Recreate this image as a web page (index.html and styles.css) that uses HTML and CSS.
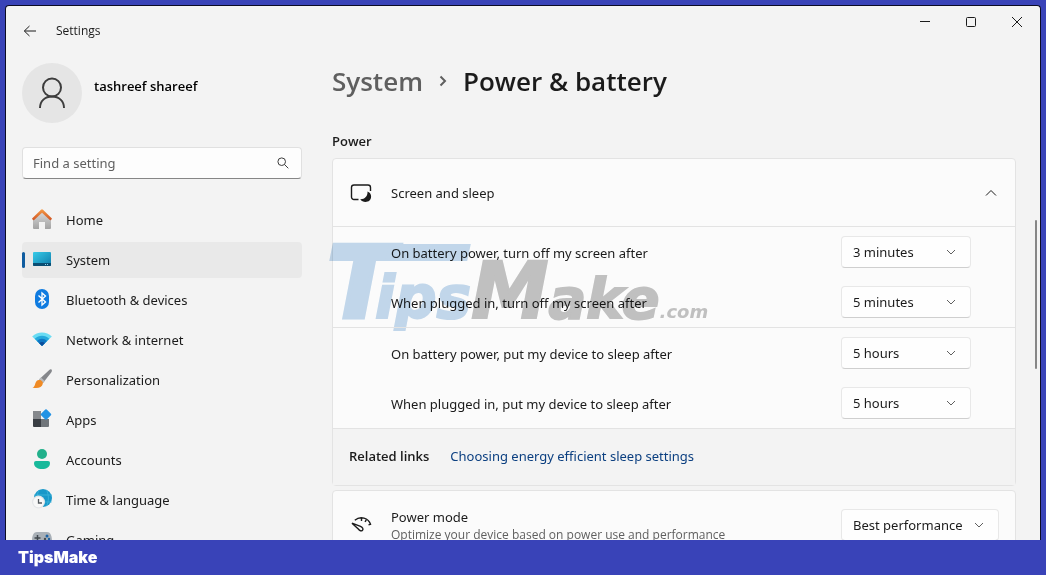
FILE: index.html
```html
<!DOCTYPE html>
<html lang="en">
<head>
    <meta charset="UTF-8">
    <meta name="viewport" content="width=device-width, initial-scale=1.0">
    <title>Settings</title>
    <link rel="stylesheet" href="styles.css">
</head>
<body>
    <div class="frame">
        <div class="window">
            <header class="titlebar">
                <button class="back-btn" aria-label="Back">
                    <svg width="14" height="12" viewBox="0 0 14 12"><path d="M13 6H1.5M6.5 1L1.3 6l5.2 5"/></svg>
                </button>
                <span class="app-name">Settings</span>
                <div class="window-controls">
                    <button aria-label="Minimize"><svg width="12" height="12" viewBox="0 0 12 12"><path d="M1 5.5h10"/></svg></button>
                    <button aria-label="Maximize"><svg width="12" height="12" viewBox="0 0 12 12"><rect x="1.5" y="1.5" width="9" height="9" rx="1"/></svg></button>
                    <button aria-label="Close"><svg width="12" height="12" viewBox="0 0 12 12"><path d="M1 1l10 10M11 1L1 11"/></svg></button>
                </div>
            </header>

            <div class="layout">
                <aside class="sidebar">
                    <div class="profile">
                        <div class="avatar">
                            <svg width="30" height="32" viewBox="0 0 30 32"><circle cx="15" cy="10.500" r="9"/><path d="M3 31c0-7 5-11.500 12-11.500S27 24 27 31"/></svg>
                        </div>
                        <span class="user-name">tashreef shareef</span>
                    </div>

                    <div class="search">
                        <input type="text" placeholder="Find a setting" aria-label="Find a setting">
                        <svg width="12" height="12" viewBox="0 0 12 12"><circle cx="4.700" cy="4.700" r="3.800"/><path d="M7.500 7.500L11.300 11.300"/></svg>
                    </div>

                    <nav class="nav">
                        <a href="#" class="nav-item">
                            <svg width="20" height="20" viewBox="0 0 20 20">
                                <defs><linearGradient id="wall" x1="0" y1="0" x2="0" y2="1"><stop offset="0" stop-color="#d8d8d8"/><stop offset="1" stop-color="#a3a3a3"/></linearGradient>
                                <linearGradient id="roof" x1="0" y1="0" x2="0" y2="1"><stop offset="0" stop-color="#f59a45"/><stop offset="1" stop-color="#cf5424"/></linearGradient></defs>
                                <path fill="url(#wall)" d="M10 2L1 9.500V18a1 1 0 0 0 1 1h5v-7h6v7h5a1 1 0 0 0 1-1V9.500z"/>
                                <path fill="url(#roof)" d="M9 -.2a1.500 1.500 0 0 1 2 0l8.700 8.400a.7.7 0 0 1 0 1l-.9.900a.7.7 0 0 1-1 0L10 2.800l-7.800 7.300a.7.7 0 0 1-1 0l-.9-.9a.7.7 0 0 1 0-1z"/>
                            </svg>
                            <span>Home</span>
                        </a>
                        <a href="#" class="nav-item active">
                            <svg width="20" height="20" viewBox="0 0 20 20">
                                <defs><linearGradient id="screen" x1="0" y1="0" x2="1" y2="1"><stop offset="0" stop-color="#37cbe8"/><stop offset="1" stop-color="#0f7cab"/></linearGradient></defs>
                                <rect x="1" y="2" width="18" height="14" rx="1" fill="url(#screen)"/>
                                <path d="M1 13h18v2a1 1 0 0 1-1 1H2a1 1 0 0 1-1-1z" fill="#0b4e73"/>
                                <path d="M13 14h1v1h-1zM15 14h1v1h-1z" fill="#8fd6ee"/>
                            </svg>
                            <span>System</span>
                        </a>
                        <a href="#" class="nav-item">
                            <svg width="20" height="20" viewBox="0 0 20 20">
                                <rect x="3" y="-1" width="14" height="20" rx="7" fill="#0f7be0"/>
                                <path d="M6.500 5.500l7 6.500L10 15V3l3.500 3-7 6.500" fill="none" stroke="#fff" stroke-width="1.300"/>
                            </svg>
                            <span>Bluetooth &amp; devices</span>
                        </a>
                        <a href="#" class="nav-item">
                            <svg width="20" height="20" viewBox="0 0 20 20">
                                <path fill="#6adcf3" d="M.2 6.500C5.500 1 14.500 1 19.800 6.500L10 16z"/>
                                <path fill="#25a9dc" d="M2.700 8.800c4-4.200 10.600-4.200 14.600 0L10 16z"/>
                                <path fill="#0f77c4" d="M5 11c2.800-2.900 7.200-2.900 10 0l-5 5z"/>
                                <path fill="#0c4d9b" d="M7.200 13.200c1.600-1.500 4-1.500 5.600 0L10 16z"/>
                            </svg>
                            <span>Network &amp; internet</span>
                        </a>
                        <a href="#" class="nav-item">
                            <svg width="20" height="20" viewBox="0 0 20 20">
                                <path fill="#85878b" d="M19.500-.5c.8.800.4 2-.3 3L11 13l-4-3.500L17 .2c.8-.8 1.800-1.400 2.500-.7z"/>
                                <path fill="#b9bbbe" d="M7 9.500l2-1.900 3.700 3.300L11 13z"/>
                                <path fill="#ef8a24" d="M7 10c2.200-.3 4.300 1.600 3.800 3.800C10 17.800 5 19 .5 17.500c2-.6 2.200-2 2.800-4C3.900 11.500 5 10.200 7 10z"/>
                            </svg>
                            <span>Personalization</span>
                        </a>
                        <a href="#" class="nav-item">
                            <svg width="20" height="20" viewBox="0 0 20 20">
                                <path fill="#85888c" d="M1 1h8v8H1z"/>
                                <path fill="#393d43" d="M1 9h8v8H2a1 1 0 0 1-1-1z"/>
                                <path fill="#70757a" d="M9 9h8v7a1 1 0 0 1-1 1H9z"/>
                                <rect x="10" y="0.500" width="8" height="8" rx="1" fill="#2393e5" transform="rotate(45 14 4.500)"/>
                            </svg>
                            <span>Apps</span>
                        </a>
                        <a href="#" class="nav-item">
                            <svg width="20" height="20" viewBox="0 0 20 20">
                                <circle cx="10" cy="4" r="5" fill="#22b08b"/>
                                <path fill="#18b99b" d="M4 11h12a2 2 0 0 1 2 2c0 4-3.500 6-8 6s-8-2-8-6a2 2 0 0 1 2-2z"/>
                            </svg>
                            <span>Accounts</span>
                        </a>
                        <a href="#" class="nav-item">
                            <svg width="20" height="20" viewBox="0 0 20 20">
                                <circle cx="11" cy="8" r="9" fill="#1998c9"/>
                                <path d="M7 0c-2.500 5-2.500 11 0 16M14.500 0c2.500 5 2.500 11 0 16M2.500 5h17M4 12h15.500" fill="none" stroke="#38b0d8"/>
                                <circle cx="6.500" cy="12" r="6.500" fill="#e4e6e8"/>
                                <circle cx="6.500" cy="12" r="5.300" fill="#f8f8f8"/>
                                <path d="M6.500 9v4H10" fill="none" stroke="#54595e" stroke-width="1.300"/>
                            </svg>
                            <span>Time &amp; language</span>
                        </a>
                        <a href="#" class="nav-item">
                            <svg width="20" height="20" viewBox="0 0 20 20">
                                <path fill="#a9b0b7" d="M5 2h10c3.500 0 5 4 5 9 0 4-1 6-3 6-2.500 0-2.500-4-5-4H8c-2.500 0-2.500 4-5 4-2 0-3-2-3-6 0-5 1.500-9 5-9z"/>
                                <path d="M5.500 5v6M2.500 8h6" stroke="#3f464d" stroke-width="1.500"/>
                                <circle cx="15" cy="6" r="1.500" fill="#1c62a4"/><circle cx="13" cy="9" r="1.200" fill="#454b52"/><circle cx="17" cy="9" r="1.200" fill="#1c62a4"/>
                            </svg>
                            <span>Gaming</span>
                        </a>
                    </nav>
                </aside>

                <main class="content">
                    <h1 class="breadcrumb">
                        <a href="#">System</a>
                        <svg width="8" height="12" viewBox="0 0 8 12"><path d="M1.500 1.500L6 6l-4.500 4.500"/></svg>
                        <span>Power &amp; battery</span>
                    </h1>

                    <h2 class="section-title">Power</h2>

                    <section class="card">
                        <button class="card-header" aria-expanded="true">
                            <svg class="card-icon" width="22" height="20" viewBox="0 0 22 20">
                                <path d="M8.500 16.500H4A2.500 2.500 0 0 1 1.500 14V4.500A2.500 2.500 0 0 1 4 2h14a2.500 2.500 0 0 1 2.500 2.500V8"/>
                                <path class="solid" d="M17.500 8.500c4 1.300 4.700 6.500 2 9-2.600 2.300-7.200 1.900-9.300-1.300 4.200.3 7.800-3 7.300-7.700z"/>
                            </svg>
                            <span class="card-label">Screen and sleep</span>
                            <svg class="chevron" width="12" height="12" viewBox="0 0 12 12"><path d="M1 8.500L6 3.500l5 5"/></svg>
                        </button>

                        <div class="group">
                            <div class="setting">
                                <label for="screen-battery">On battery power, turn off my screen after</label>
                                <div class="dropdown">
                                    <select id="screen-battery"><option>3 minutes</option></select>
                                    <svg width="10" height="10" viewBox="0 0 10 10"><path d="M1 3l4 4 4-4"/></svg>
                                </div>
                            </div>
                            <div class="setting">
                                <label for="screen-plugged">When plugged in, turn off my screen after</label>
                                <div class="dropdown">
                                    <select id="screen-plugged"><option>5 minutes</option></select>
                                    <svg width="10" height="10" viewBox="0 0 10 10"><path d="M1 3l4 4 4-4"/></svg>
                                </div>
                            </div>
                            <div class="watermark" aria-hidden="true">
                                <span class="wm-t">T</span><span class="wm-ips">ips</span><span class="wm-m">M</span><span class="wm-ake">ake</span><span class="wm-com">.com</span>
                            </div>
                        </div>

                        <div class="group">
                            <div class="setting">
                                <label for="sleep-battery">On battery power, put my device to sleep after</label>
                                <div class="dropdown">
                                    <select id="sleep-battery"><option>5 hours</option></select>
                                    <svg width="10" height="10" viewBox="0 0 10 10"><path d="M1 3l4 4 4-4"/></svg>
                                </div>
                            </div>
                            <div class="setting">
                                <label for="sleep-plugged">When plugged in, put my device to sleep after</label>
                                <div class="dropdown">
                                    <select id="sleep-plugged"><option>5 hours</option></select>
                                    <svg width="10" height="10" viewBox="0 0 10 10"><path d="M1 3l4 4 4-4"/></svg>
                                </div>
                            </div>
                        </div>

                        <div class="related">
                            <strong>Related links</strong>
                            <a href="#">Choosing energy efficient sleep settings</a>
                        </div>
                    </section>

                    <section class="card power-mode">
                        <svg class="card-icon" width="22" height="20" viewBox="0 0 22 20">
                            <path d="M4.800 5.200C10.500 .5 18.500 3 20.500 9.300l-2 .6M11.500 3v3M16.300 5l-1.300 1.800"/>
                            <path d="M2 8.200L10.500 11.300c2.300 1.200 3 2.800 2 3.900-1.200 1.200-2.800.7-4.200-1.200z"/>
                        </svg>
                        <div class="card-text">
                            <label for="power-mode">Power mode</label>
                            <small>Optimize your device based on power use and performance</small>
                        </div>
                        <div class="dropdown wide">
                            <select id="power-mode"><option>Best performance</option></select>
                            <svg width="10" height="10" viewBox="0 0 10 10"><path d="M1 3l4 4 4-4"/></svg>
                        </div>
                    </section>
                </main>
            </div>
            <div class="scroll-thumb"></div>
        </div>
    </div>

    <footer class="brand">TipsMake</footer>
</body>
</html>
```
FILE: styles.css
```css
:root {
    --brand: #3943b8;
    --bg: #f3f3f3;
    --card: #fbfbfb;
    --line: #e3e3e3;
    --text: #1b1b1b;
    --muted: #5f5f5f;
    --link: #0b3f80;
}

* {
    box-sizing: border-box;
}

body {
    margin: 0;
    height: 100vh;
    display: flex;
    flex-direction: column;
    overflow: hidden;
    background: var(--brand);
    color: var(--text);
    font-family: "Noto Sans", "Open Sans", sans-serif;
    font-size: 13px;
    line-height: 20px;
}

button,
input,
select {
    font: inherit;
    color: inherit;
}

button {
    border: none;
    padding: 0;
    background: none;
}

a {
    color: inherit;
    text-decoration: none;
}

svg {
    flex: none;
    overflow: visible;
    fill: none;
    stroke: none;
}

.frame {
    flex: 1;
    min-height: 0;
    display: flex;
    padding: 5px 5px 0;
}

.window {
    position: relative;
    flex: 1;
    display: flex;
    flex-direction: column;
    overflow: hidden;
    background: var(--bg);
    border: 1px solid #0b0b24;
    border-bottom: none;
    border-radius: 4px 4px 0 0;
}

/* Title bar */
.titlebar {
    display: flex;
    align-items: center;
    height: 50px;
    flex: none;
    padding-left: 17px;
}

.titlebar svg {
    display: block;
    margin: auto;
    stroke: #1b1b1b;
}

.app-name {
    margin-left: 19px;
    font-family: "Open Sans", sans-serif;
    font-size: 12px;
}

.window-controls {
    display: flex;
    align-self: flex-start;
    margin-left: auto;
}

.window-controls button {
    width: 46px;
    height: 32px;
}

.layout {
    flex: 1;
    min-height: 0;
    display: flex;
}

/* Sidebar */
.sidebar {
    flex: none;
    width: 296px;
    padding: 7px 0 0 16px;
}

.profile {
    display: flex;
    align-items: center;
    gap: 12px;
}

.avatar {
    display: flex;
    align-items: center;
    justify-content: center;
    width: 60px;
    height: 60px;
    border-radius: 50%;
    background: #e5e5e5;
}

.avatar svg {
    stroke: #3d3d3d;
    stroke-width: 2;
}

.user-name {
    padding-bottom: 14px;
    font-family: "Open Sans", sans-serif;
    font-weight: 600;
    color: #000;
}

.search {
    position: relative;
    margin-top: 24px;
}

.search input {
    display: block;
    width: 100%;
    height: 32px;
    padding: 0 36px 0 10px;
    background: #fdfdfd;
    border: 1px solid #e0e0e0;
    border-bottom-color: #868686;
    border-radius: 4px;
}

.search input::placeholder {
    color: var(--muted);
    opacity: 1;
}

.search svg {
    position: absolute;
    top: 10px;
    right: 13px;
    stroke: #3d3d3d;
}

.nav {
    display: flex;
    flex-direction: column;
    gap: 4px;
    margin-top: 23px;
}

.nav-item {
    position: relative;
    display: flex;
    align-items: center;
    gap: 14px;
    height: 36px;
    padding-left: 10px;
    border-radius: 4px;
}

.nav-item.active {
    background: #e9e9e9;
}

.nav-item.active::before {
    content: "";
    position: absolute;
    left: 0;
    width: 3px;
    height: 16px;
    border-radius: 2px;
    background: #0f5c9f;
}

/* Content */
.content {
    flex: 1;
    min-width: 0;
    padding: 7px 24px 0 30px;
}

.breadcrumb {
    display: flex;
    align-items: center;
    gap: 16px;
    margin: 0 0 32px;
    font-family: "Open Sans", sans-serif;
    font-size: 26px;
    font-weight: 600;
    line-height: 36px;
}

.breadcrumb a {
    color: var(--muted);
}

.breadcrumb svg {
    stroke: var(--muted);
    stroke-width: 2;
}

.section-title {
    margin: 0 0 7px;
    font-family: "Open Sans", sans-serif;
    font-size: 13px;
    font-weight: 600;
}

.card {
    margin-bottom: 4px;
    background: var(--card);
    border: 1px solid var(--line);
    border-radius: 4px;
}

.card-header {
    display: flex;
    align-items: center;
    width: 100%;
    height: 67px;
    padding: 0 18px 0 17px;
}

.card-icon {
    margin-right: 19px;
    stroke: #1b1b1b;
    stroke-width: 1.4;
}

.card-icon .solid {
    fill: #1b1b1b;
    stroke: none;
}

.chevron {
    margin-left: auto;
    stroke: #1b1b1b;
}

.group {
    position: relative;
    border-top: 1px solid var(--line);
}

.setting {
    display: flex;
    align-items: center;
    justify-content: space-between;
    height: 50px;
    padding: 0 44px 0 58px;
}

.setting label {
    padding-top: 2px;
}

.dropdown {
    position: relative;
    width: 130px;
}

.dropdown select {
    display: block;
    width: 100%;
    height: 32px;
    padding: 0 30px 0 11px;
    appearance: none;
    background: #fefefe;
    border: 1px solid #e8e8e8;
    border-bottom-color: #cfcfcf;
    border-radius: 4px;
}

.dropdown svg {
    position: absolute;
    top: 11px;
    right: 15px;
    pointer-events: none;
    stroke: #5f5f5f;
}

.dropdown.wide {
    width: 158px;
    margin-left: auto;
}

.related {
    display: flex;
    align-items: center;
    gap: 21px;
    height: 57px;
    padding: 0 16px 2px;
    background: var(--bg);
    border-top: 1px solid var(--line);
}

.related strong {
    font-family: "Open Sans", sans-serif;
    font-weight: 600;
}

.related a {
    color: var(--link);
}

.power-mode {
    display: flex;
    align-items: center;
    height: 70px;
    padding: 0 16px 0 17px;
}

.card-text {
    display: flex;
    flex-direction: column;
}

.card-text small {
    font-family: "Open Sans", sans-serif;
    font-size: 12px;
    line-height: 16px;
    color: var(--muted);
}

/* Logo laid over the first group of settings */
.watermark {
    position: absolute;
    left: -6px;
    bottom: -21px;
    display: flex;
    align-items: baseline;
    line-height: 72px;
    font-family: "DejaVu Sans", sans-serif;
    font-weight: bold;
    font-style: italic;
    color: #c3c3c3;
    pointer-events: none;
    mix-blend-mode: multiply;
    -webkit-text-stroke: 2px currentColor;
}

.wm-t,
.wm-ips {
    color: #c4daee;
}

.wm-t {
    position: relative;
    width: 48px;
    font-size: 99px;
    -webkit-text-stroke-width: 4px;
}

.wm-t::after {
    content: "";
    position: absolute;
    top: -4px;
    left: 60px;
    width: 82px;
    height: 17px;
    background: #c4daee;
    transform: skewX(-12deg);
}

.wm-ips {
    font-size: 58px;
}

.wm-m {
    font-size: 78px;
}

.wm-ake {
    font-size: 56px;
}

.wm-com {
    font-size: 18px;
    -webkit-text-stroke-width: 0;
}

.scroll-thumb {
    position: absolute;
    top: 214px;
    right: 3px;
    width: 2px;
    height: 149px;
    border-radius: 1px;
    background: #868686;
}

.brand {
    flex: none;
    height: 35px;
    padding-left: 18px;
    font-family: Inter, "Liberation Sans", sans-serif;
    font-size: 16px;
    font-weight: 900;
    line-height: 35px;
    color: #fff;
}
```
